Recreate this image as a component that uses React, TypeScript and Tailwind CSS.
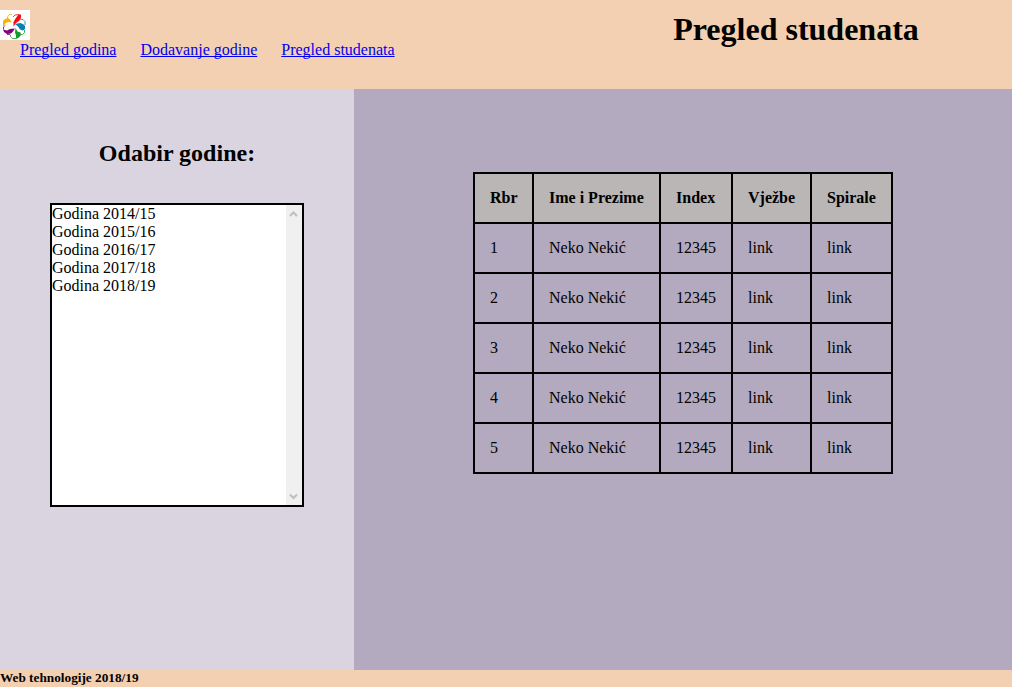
const links = ["Pregled godina", "Dodavanje godine", "Pregled studenata"];
const years = ["2014/15", "2015/16", "2016/17", "2017/18", "2018/19"];
const headers = ["Rbr", "Ime i Prezime", "Index", "Vježbe", "Spirale"];
const rows = [1, 2, 3, 4, 5];

function Logo() {
  return (
    <svg width="30" height="30" viewBox="0 0 30 30" className="block bg-white" fill="none">
      <path d="M3 16v-5l2-2 3-1 2 1.500 2 3-3.500-.500-3 1-1.500 3z" fill="#fdb000" />
      <path d="M7.500 10V7l2-2.500h2.500" stroke="#fdb000" strokeWidth="0.8" />
      <path d="M18.500 4.500H21V8l-2 3-3 2-2.500 3.500 0-4.500 2-3.500z" fill="#f80c12" />
      <path d="M13 7l2-2 4-.500" stroke="#f80c12" strokeWidth="0.8" />
      <path d="M15 14l5-1 3 1 2 2v3l-2 1.500-3-1-2-3z" fill="#087fae" />
      <path d="M20.500 9.500h2.500l2 2V15" stroke="#087fae" strokeWidth="0.8" />
      <path d="M3 19.500l4 1 3-1.500 5-.500-2 3-2 2-4 .500L4 22z" fill="#800080" />
      <path d="M3.500 19.500v-2.500l1.500-1.500M7 24.500h3" stroke="#800080" strokeWidth="0.8" />
      <path d="M15.500 18l2 3.500 3 1 .500 2.500-2 2.500-3 1.500 0-3.500-1-3z" fill="#149b30" />
      <path d="M10.500 25v1.500l2 2H16M21 24.500h1.500l2-2V20" stroke="#149b30" strokeWidth="0.8" />
    </svg>
  );
}

export default function App() {
  return (
    <div className="flex h-[687px] w-[1012px] flex-col overflow-hidden bg-[#f3d0b1] font-['Liberation_Serif',serif] text-base leading-[18px] text-black">
      <header className="flex h-[89px] shrink-0">
        <div className="w-[580px] pt-2.5">
          <Logo />
          <nav className="flex gap-6 pl-5 pt-px text-[#0000ee]">
            {links.map((label) => (
              <a key={label} href="#" className="underline [text-decoration-skip-ink:none]">{label}</a>
            ))}
          </nav>
        </div>
        <h1 className="flex-1 pt-[11px] text-center text-[32px] leading-9 font-bold">Pregled studenata</h1>
      </header>

      <main className="flex h-[581px] shrink-0">
        <aside className="w-[354px] bg-[#dad4e0] px-[50px] pt-[50px]">
          <h2 className="text-center text-2xl leading-7 font-bold">Odabir godine:</h2>
          <div className="mt-9 flex h-[304px] w-[254px] justify-between border-2 border-black bg-white">
            <ul>
              {years.map((year) => (
                <li key={year}>Godina {year}</li>
              ))}
            </ul>
            <div className="flex w-4 flex-col items-start justify-between bg-[#f0f0f0] py-[5px] pl-[3px]">
              <svg width="9" height="7" viewBox="0 0 9 7" fill="none" stroke="#bfbfbf" strokeWidth="2"><path d="M1 6 4.500 2.500 8 6" /></svg>
              <svg width="9" height="7" viewBox="0 0 9 7" fill="none" stroke="#bfbfbf" strokeWidth="2"><path d="M1 1.500 4.500 5 8 1.500" /></svg>
            </div>
          </div>
        </aside>

        <section className="flex-1 bg-[#b3aac0] pt-[83px] pl-[119px]">
          <table className="w-[420px] table-fixed border-collapse text-left">
            <colgroup>
              <col className="w-[59px]" />
              <col className="w-[127px]" />
              <col className="w-[72px]" />
              <col className="w-[79px]" />
              <col className="w-[81px]" />
            </colgroup>
            <thead>
              <tr className="h-[50px] bg-[#bab6b5]">
                {headers.map((header) => (
                  <th key={header} className="border-2 border-black px-[15px] py-0 font-bold">{header}</th>
                ))}
              </tr>
            </thead>
            <tbody>
              {rows.map((row) => (
                <tr key={row} className="h-[50px]">
                  {[row, "Neko Nekić", "12345", "link", "link"].map((value, i) => (
                    <td key={i} className="border-2 border-black px-[15px] py-0">{value}</td>
                  ))}
                </tr>
              ))}
            </tbody>
          </table>
        </section>
      </main>

      <footer className="h-[17px] text-[13.280px] leading-4 font-bold">Web tehnologije 2018/19</footer>
    </div>
  );
}
